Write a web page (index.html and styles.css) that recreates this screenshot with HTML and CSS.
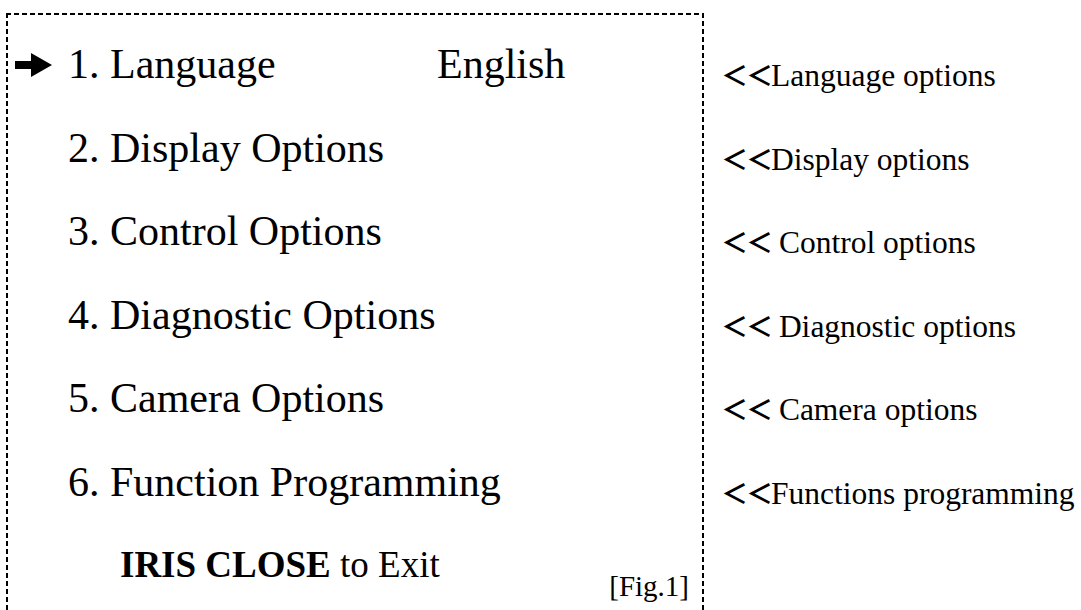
FILE: index.html
```html
<!DOCTYPE html>
<html lang="en">
<head>
<meta charset="utf-8">
<title>Menu</title>
<link rel="stylesheet" href="styles.css">
</head>
<body>
<div class="page">
  <div class="menu">
    <div class="item">
      <svg class="arrow" viewBox="0 0 37 24" width="37" height="24" aria-hidden="true"><path d="M0 8 H16 V0 L37 12 L16 24 V16 H0 Z" fill="#000"/></svg>
      <span class="name">1. Language</span>
      <span class="value">English</span>
    </div>
    <div class="item"><span></span><span class="name">2. Display Options</span></div>
    <div class="item"><span></span><span class="name">3. Control Options</span></div>
    <div class="item"><span></span><span class="name">4. Diagnostic Options</span></div>
    <div class="item"><span></span><span class="name">5. Camera Options</span></div>
    <div class="item"><span></span><span class="name">6. Function Programming</span></div>
    <div class="exit-row">
      <span class="exit"><b>IRIS CLOSE</b> to Exit</span>
      <span class="fig">[Fig.1]</span>
    </div>
  </div>
  <ul class="notes">
    <li><span class="lt">＜＜</span>Language options</li>
    <li><span class="lt">＜＜</span>Display options</li>
    <li><span class="lt">＜＜</span> Control options</li>
    <li><span class="lt">＜＜</span> Diagnostic options</li>
    <li><span class="lt">＜＜</span> Camera options</li>
    <li><span class="lt">＜＜</span>Functions programming</li>
  </ul>
</div>
</body>
</html>
```

FILE: styles.css
```css
html, body {
  margin: 0;
  padding: 0;
  background: #fff;
  overflow: hidden;
}
body {
  font-family: "Liberation Serif", "Times New Roman", serif;
  color: #000;
}
.page {
  display: flex;
  align-items: flex-start;
  width: 1081px;
  height: 610px;
}
.menu {
  box-sizing: border-box;
  width: 698px;
  height: 640px;
  margin: 13px 0 0 6px;
  padding: 10px 9px 0 9px;
  background:
    linear-gradient(to right, #000 5px, transparent 5px) left top / 8px 2px repeat-x,
    linear-gradient(to bottom, #000 5px, transparent 5px) left top / 2px 8px repeat-y,
    linear-gradient(to bottom, #000 5px, transparent 5px) right top / 2px 8px repeat-y;
}
.item {
  display: grid;
  grid-template-columns: 53px 369px auto;
  align-items: center;
  height: 83.6px;
  font-size: 42px;
  line-height: 83.6px;
}
.arrow {
  display: block;
}
.name {
  white-space: nowrap;
}
.value {
  white-space: nowrap;
}
.exit-row {
  display: flex;
  justify-content: space-between;
  align-items: flex-end;
  height: 80px;
  padding: 0 6px 0 105px;
}
.exit {
  font-size: 37px;
  line-height: 80px;
}
.fig {
  font-size: 29px;
  line-height: normal;
  margin-bottom: 2px;
}
.notes {
  list-style: none;
  margin: 0 0 0 17px;
  padding: 34px 0 0 0;
}
.notes li {
  height: 83.6px;
  font-size: 31.5px;
  line-height: 83.6px;
  white-space: nowrap;
}
.lt {
  font-family: "Noto Sans CJK JP", sans-serif;
  font-size: 27px;
  font-weight: 700;
  letter-spacing: -2px;
  line-height: 1;
}
```
